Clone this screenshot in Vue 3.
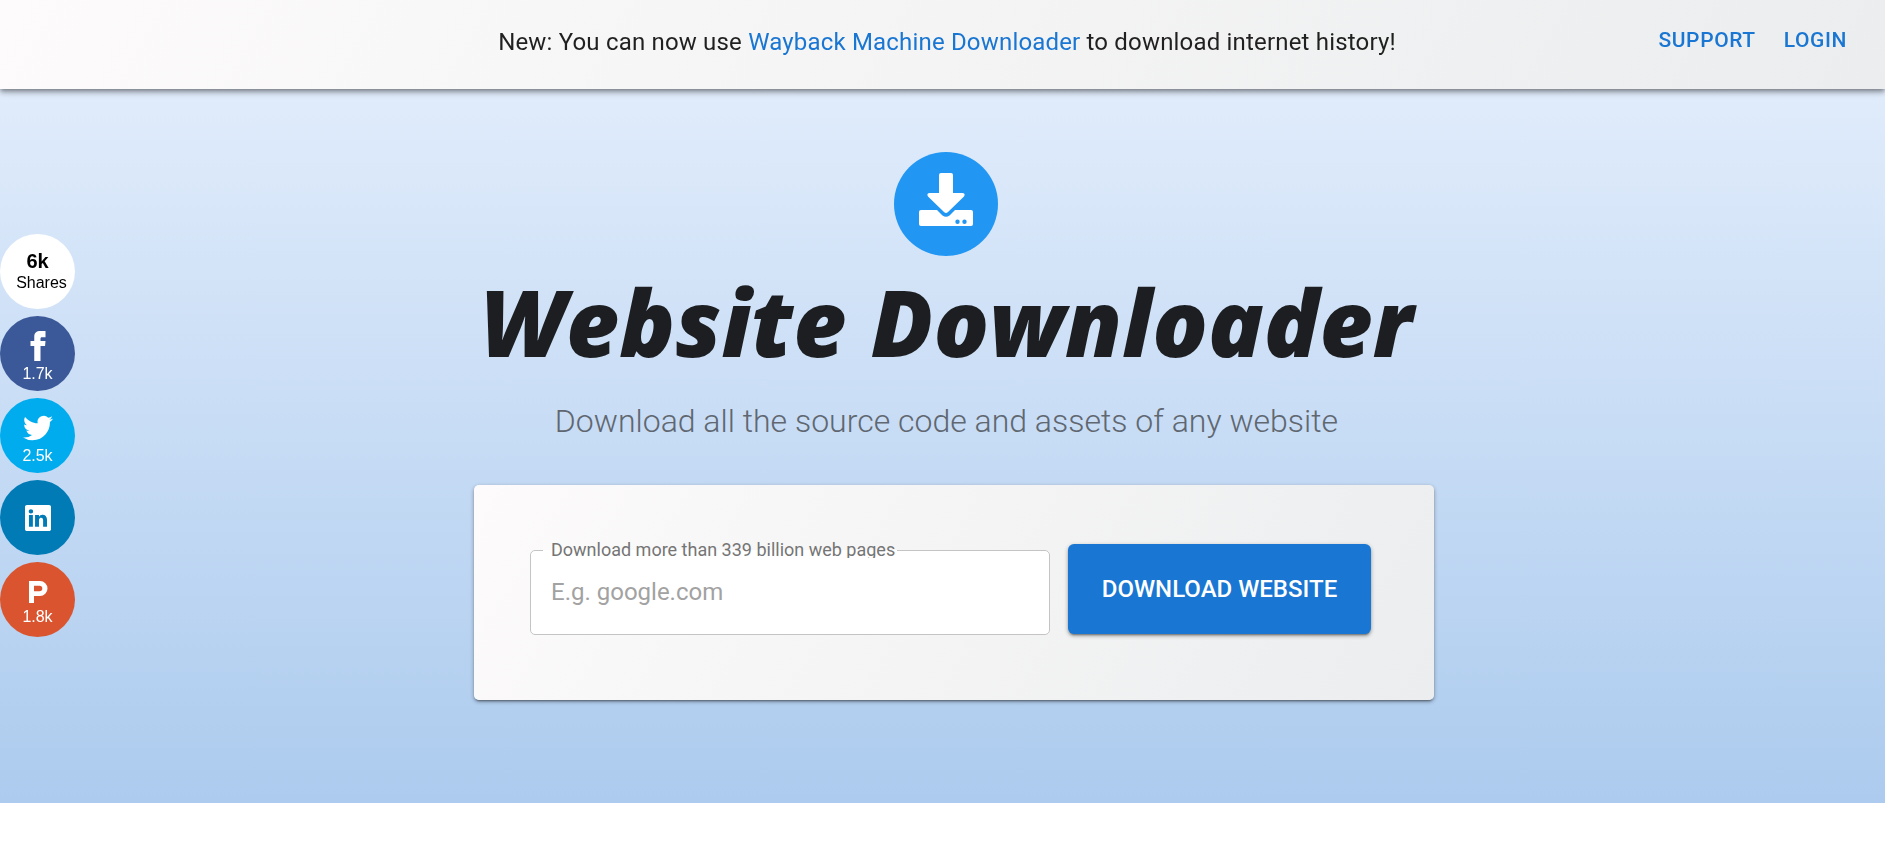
<script setup>
import { ref } from 'vue'

const url = ref('')
const shares = [
  { name: 'Facebook', count: '1.7k', cls: 'facebook', icon: 'M9 8H6v4h3v12h5V12h3.642L18 8h-4V6.333C14 5.378 14.192 5 15.115 5H18V0h-3.808C10.596 0 9 1.583 9 4.615V8z' },
  { name: 'Twitter', count: '2.5k', cls: 'twitter', icon: 'M23.954 4.569a10 10 0 0 1-2.825.775 4.958 4.958 0 0 0 2.163-2.723c-.951.555-2.005.959-3.127 1.184a4.92 4.92 0 0 0-8.384 4.482C7.691 8.094 4.066 6.13 1.64 3.161a4.822 4.822 0 0 0-.666 2.475c0 1.71.87 3.213 2.188 4.096a4.904 4.904 0 0 1-2.228-.616v.061a4.923 4.923 0 0 0 3.946 4.827 4.996 4.996 0 0 1-2.212.085 4.937 4.937 0 0 0 4.604 3.417 9.868 9.868 0 0 1-6.102 2.105c-.39 0-.779-.023-1.17-.067a13.995 13.995 0 0 0 7.557 2.209c9.054 0 13.999-7.496 13.999-13.986 0-.209 0-.42-.015-.63a9.936 9.936 0 0 0 2.46-2.548l-.047-.02z' },
  { name: 'LinkedIn', count: '', cls: 'linkedin', icon: 'M22.23 0H1.77C.8 0 0 .77 0 1.72v20.56C0 23.23.8 24 1.77 24h20.46c.98 0 1.77-.77 1.77-1.72V1.72C24 .77 23.2 0 22.23 0zM7.27 20.1H3.65V9.24h3.62V20.1zM5.47 7.76h-.03c-1.22 0-2-.83-2-1.87 0-1.06.8-1.87 2.05-1.87 1.24 0 2 .8 2.02 1.87 0 1.04-.78 1.87-2.05 1.87zM20.34 20.1h-3.63v-5.8c0-1.45-.52-2.45-1.83-2.45-1 0-1.6.67-1.87 1.32-.1.23-.11.55-.11.88v6.05H9.28s.05-9.82 0-10.84h3.63v1.54a3.6 3.6 0 0 1 3.26-1.8c2.39 0 4.18 1.56 4.18 4.89v6.21z' },
  { name: 'Product Hunt', count: '1.8k', cls: 'producthunt', icon: 'M3 1h11a7.5 7.5 0 0 1 0 15H8v7H3V1zm5 4.700v5.600h5.500a2.800 2.800 0 0 0 0-5.600H8z' }
]
</script>

<template>
  <div class="page">
    <header class="bar">
      <p class="notice">New: You can now use <a href="#wayback">Wayback Machine Downloader</a> to download internet history!</p>
      <nav class="nav">
        <a href="#support">SUPPORT</a>
        <a href="#login">LOGIN</a>
      </nav>
    </header>

    <main class="hero">
      <div class="intro">
        <span class="logo">
          <svg viewBox="0 0 54 54" aria-hidden="true">
            <path d="M22 0h10q2 0 2 2v18h9q4 0 2 3.500L29 39q-2 2-4 0L9 23.500Q7 20 11 20h9V2q0-2 2-2z" />
            <path fill-rule="evenodd" d="M2 37h16l5.500 5.500q3.500 2.500 7 0L36 37h16q2 0 2 2v12q0 2-2 2H2q-2 0-2-2V39q0-2 2-2zm36.500 9.500a2.200 2.200 0 1 0 0 4.400a2.200 2.200 0 0 0 0-4.400zm7 0a2.200 2.200 0 1 0 0 4.400a2.200 2.200 0 0 0 0-4.400z" />
          </svg>
        </span>
        <h1>Website Downloader</h1>
        <p class="subtitle">Download all the source code and assets of any website</p>
      </div>

      <form class="card" @submit.prevent>
        <fieldset class="field">
          <legend><label for="site">Download more than 339 billion web pages</label></legend>
          <input id="site" v-model="url" type="text" placeholder="E.g. google.com">
        </fieldset>
        <button class="submit" type="submit">DOWNLOAD WEBSITE</button>
      </form>
    </main>

    <aside class="shares" aria-label="Share">
      <div class="bubble total"><strong>6k</strong><span>Shares</span></div>
      <a v-for="s in shares" :key="s.name" href="#share" class="bubble" :class="s.cls" :aria-label="s.name">
        <svg viewBox="0 0 24 24" aria-hidden="true"><path fill-rule="evenodd" :d="s.icon" /></svg>
        <span v-if="s.count">{{ s.count }}</span>
      </a>
    </aside>
  </div>
</template>

<style>
body { margin: 0; background: #fff; }
</style>

<style scoped>
.page { font-family: Roboto, "Liberation Sans", sans-serif; color: rgba(0, 0, 0, 0.87); }
.page * { box-sizing: border-box; }
a { color: #1976d2; text-decoration: none; }

.bar {
  position: fixed;
  z-index: 2;
  top: 0;
  left: 0;
  right: 0;
  height: 89px;
  display: grid;
  grid-template-columns: 1fr auto 1fr;
  align-items: center;
  padding: 0 38px 6px 47px;
  background: linear-gradient(120deg, #fdfbfb 0%, #ebedee 100%);
  box-shadow: 0 2px 4px -1px rgba(0, 0, 0, 0.3), 0 4px 5px rgba(0, 0, 0, 0.2), 0 1px 10px rgba(0, 0, 0, 0.16);
}
.notice { grid-column: 2; margin: 0; font-size: 24px; line-height: 32px; letter-spacing: 0.0075em; }
.nav { justify-self: end; display: flex; gap: 28px; padding-bottom: 4px; font-size: 21px; font-weight: 500; line-height: 28px; letter-spacing: 0.02857em; }

.hero {
  display: flex;
  flex-direction: column;
  align-items: center;
  padding: 152px 16px 103px;
  background: linear-gradient(to top, #accbee 0%, #e7f0fd 100%);
}
.intro { display: flex; flex-direction: column; align-items: center; padding-left: 8px; text-align: center; }
.logo { display: flex; justify-content: center; width: 104px; height: 104px; padding-top: 21px; border-radius: 50%; background: #2196f3; }
.logo svg { width: 54px; height: 54px; fill: #fff; }
h1 { margin: 6px 0 0; font: italic 800 92px/120px "Open Sans", sans-serif; color: #1c1e21; white-space: nowrap; }
.subtitle { margin: 17px 0 0; font-size: 32px; line-height: 44px; font-weight: 300; color: #606770; }

.card {
  display: flex;
  align-items: flex-start;
  gap: 18px;
  width: 100%;
  max-width: 960px;
  margin: 42px 0 0 23px;
  padding: 59px 63px 65px 56px;
  border-radius: 5px;
  background: linear-gradient(120deg, #fdfbfb 0%, #ebedee 100%);
  box-shadow: 0 3px 1px -2px rgba(0, 0, 0, 0.2), 0 2px 2px rgba(0, 0, 0, 0.14), 0 1px 5px rgba(0, 0, 0, 0.12), 0 2px 4px rgba(0, 0, 0, 0.2);
}
.field { flex: 1; min-width: 0; height: 93px; margin: -2px 0 0; padding: 0 20px 0 12px; border: 1px solid #c4c4c4; border-radius: 5px; background: #fff; }
legend { height: 16px; padding: 0 2px 0 8px; font-size: 18px; line-height: 16px; color: #757575; }
legend label { display: block; }
.field input { position: relative; display: block; width: 100%; height: 68px; padding: 0 8px; border: 0; outline: 0; background: #fff; font: 24px/32px Roboto, sans-serif; }
.field input::placeholder { color: #a2a2a2; opacity: 1; }
.submit {
  width: 303px;
  height: 90px;
  padding: 0;
  border: 0;
  border-radius: 6px;
  background: #1976d2;
  color: #fff;
  font: 500 24px/32px Roboto, sans-serif;
  box-shadow: 0 3px 1px -2px rgba(0, 0, 0, 0.2), 0 2px 2px rgba(0, 0, 0, 0.14), 0 1px 5px rgba(0, 0, 0, 0.12), 0 2px 4px rgba(0, 0, 0, 0.2);
}

.shares { position: fixed; z-index: 1; left: 0; top: 234px; display: flex; flex-direction: column; gap: 7px; font: 16px/18px "Liberation Sans", Arial, sans-serif; }
.bubble { display: flex; flex-direction: column; align-items: center; justify-content: center; gap: 4px; width: 75px; height: 75px; padding-top: 7px; border-radius: 50%; color: #fff; }
.bubble svg { width: 30px; height: 30px; fill: currentColor; }
.total { gap: 3px; padding: 0; background: #fff; color: #000; }
.total strong { font-size: 20px; line-height: 20px; }
.total span { padding-left: 8px; }
.facebook { background: #3b5998; }
.twitter { background: #00aced; }
.linkedin { padding: 0; background: #007bb6; }
.linkedin svg { width: 26px; height: 26px; }
.producthunt { background: #da552f; }
.producthunt svg { width: 24px; height: 24px; }
</style>
